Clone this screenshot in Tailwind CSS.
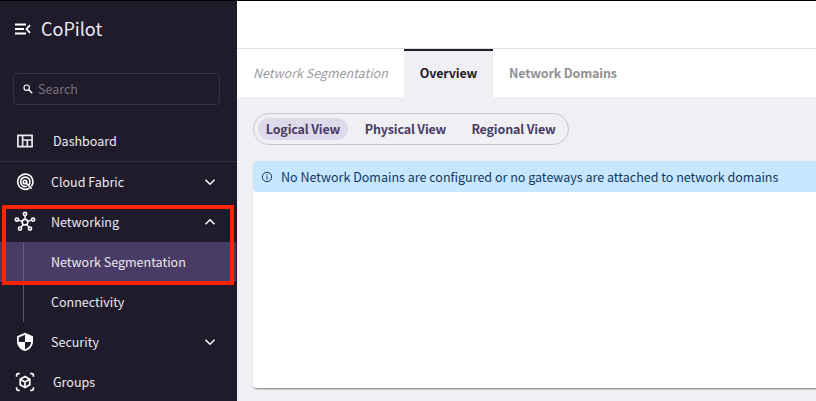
<!DOCTYPE html>
<html lang="en">
<head>
<meta charset="utf-8">
<title>CoPilot</title>
<script src="https://cdn.jsdelivr.net/npm/@tailwindcss/browser@4"></script>
</head>
<body class="w-[816px] h-[401px] overflow-hidden bg-[#f0eff4] font-['Noto_Sans_CJK_SC','Noto_Sans',sans-serif] text-[12.53px] whitespace-nowrap">
<div class="relative flex h-[401px] border-t border-black">
  <aside class="w-[237px] shrink-0 bg-[#201b2b] text-[#ebe9ef] overflow-hidden">
    <div class="flex h-[56px] items-center pl-[15px] gap-[10px]">
      <svg class="w-4 h-3 text-white" viewBox="0 0 16 12" fill="none" stroke="currentColor" stroke-width="1.8"><path d="M0 1.5h11M0 6h9M0 10.5h11M15 2.2L11.5 6L15 9.8"/></svg>
      <span class="pb-[2px] text-[18px] leading-6">CoPilot</span>
    </div>
    <div class="mt-4 ml-[13px] flex h-8 w-[207px] items-center rounded-[4px] border border-[#373150] pl-[9px] gap-[5px]">
      <svg class="w-[10px] h-[10px] text-white" viewBox="0 0 10 10" fill="none" stroke="currentColor"><circle cx="3.7" cy="3.7" r="2.7" stroke-width="1.1"/><path d="M5.8 5.8L9.2 9.2" stroke-width="1.3"/></svg>
      <span class="text-[#77727f]">Search</span>
    </div>
    <nav class="mt-4">
      <div class="flex h-[41px] items-center border-b border-[#322d47] pl-[15px]">
        <svg class="w-5 h-5" viewBox="0 0 20 20" fill="none" stroke="currentColor" stroke-width="1.7"><path d="M2.9 4.4H17.1V15.6H2.9ZM7.6 4.4V15.6M7.6 9H17.1M12.3 9V15.6"/></svg>
        <span class="ml-[18px]">Dashboard</span>
      </div>
      <div class="flex h-10 items-center pl-[15px] pr-[21px]">
        <svg class="w-5 h-5" viewBox="0 0 20 20" fill="none" stroke="white" stroke-width="1.6"><path d="M16.4 14.3A7.6 7.6 0 1 0 14.3 16.2M13.5 13.3A4.7 4.7 0 1 0 11.8 14.3M10.3 10.3L16.6 16.6"/><circle cx="10" cy="10" r="1.8"/></svg>
        <span class="ml-4 flex-1">Cloud Fabric</span>
        <svg class="w-[12px] h-2" viewBox="0 0 12 8" fill="none" stroke="white" stroke-width="1.5"><path d="M1.5 1.7L6 6.2L10.5 1.7"/></svg>
      </div>
      <div class="flex h-10 items-center pl-[15px] pr-[21px]">
        <svg class="w-5 h-5 overflow-visible" viewBox="0 0 20 20" fill="none" stroke="white" stroke-width="1.6"><circle cx="10" cy="10.2" r="2.8"/><circle cx="10" cy="2" r="1.6"/><circle cx="1.9" cy="7.6" r="1.6"/><circle cx="18.1" cy="7.6" r="1.6"/><circle cx="5" cy="16.6" r="1.6"/><circle cx="15" cy="16.6" r="1.6"/><path stroke-width="1.4" d="M10 3.8V7.4M3.4 8.1L7.3 9.3M16.6 8.1L12.7 9.3M6 15.4L8.3 12.5M14 15.4L11.7 12.5"/></svg>
        <span class="ml-4 flex-1">Networking</span>
        <svg class="w-[12px] h-2" viewBox="0 0 12 8" fill="none" stroke="white" stroke-width="1.5"><path d="M1.5 6.3L6 1.8L10.5 6.3"/></svg>
      </div>
      <div class="mr-px flex h-10 items-center bg-[#483c66] pl-[23px]"><div class="flex h-10 items-center border-l border-[#686078] pl-[27px]">Network Segmentation</div></div>
      <div class="flex h-10 items-center pl-[23px]"><div class="flex h-10 items-center border-l border-[#5a5564] pl-[27px]">Connectivity</div></div>
      <div class="flex h-10 items-center pl-[15px] pr-[21px]">
        <svg class="w-5 h-5" viewBox="0 0 20 20"><path fill="white" d="M10 .8L18 4.2V9.2C18 13.8 14.7 17.8 10 19.1C5.3 17.8 2 13.8 2 9.2V4.2Z"/><path fill="#201b2b" d="M10 2.8V10H3.8V5.4ZM10 10H16.2C15.8 13.3 13.3 16.2 10 17.2Z"/></svg>
        <span class="ml-4 flex-1">Security</span>
        <svg class="w-[12px] h-2" viewBox="0 0 12 8" fill="none" stroke="white" stroke-width="1.5"><path d="M1.5 1.7L6 6.2L10.5 1.7"/></svg>
      </div>
      <div class="flex h-10 items-center pl-[15px]">
        <svg class="w-5 h-5" viewBox="0 0 20 20" fill="none" stroke="white" stroke-width="1.7"><path d="M1.6 4.7V3.2Q1.6 1.6 3.2 1.6H4.8M15.2 1.6H16.8Q18.4 1.6 18.4 3.2V4.7M18.4 15.3V16.8Q18.4 18.4 16.8 18.4H15.2M4.8 18.4H3.2Q1.6 18.4 1.6 16.8V15.3M10 4.6L14.8 7.3V12.7L10 15.4L5.2 12.7V7.3ZM5.2 7.3L10 10L14.8 7.3M10 10V15.4"/></svg>
        <span class="ml-[18px]">Groups</span>
      </div>
    </nav>
  </aside>
  <main class="flex flex-1 min-w-0 flex-col">
    <div class="h-12 shrink-0 border-b border-[#dedee1] bg-white"></div>
    <div class="flex h-12 shrink-0 bg-white">
      <div class="flex w-[167px] items-center pl-4 pt-px italic text-[#9b9b9d]">Network Segmentation</div>
      <div class="flex w-[89px] items-center justify-center border-t-2 border-[#201b2b] bg-[#f0eff4] pb-px font-bold tracking-[-0.17px] text-[#201b2b]">Overview</div>
      <div class="flex items-center pl-4 pt-px font-bold tracking-[-0.17px] text-[#919096]">Network Domains</div>
    </div>
    <div class="pl-4 pt-4">
      <div class="flex h-8 w-[316px] items-center rounded-full border border-[#c9c7d0] pl-1 font-bold tracking-[-0.17px] text-[#483c66]">
        <div class="flex h-[22px] w-[90px] items-center justify-center rounded-full bg-[#dedae9]">Logical View</div>
        <div class="flex w-[115px] justify-center">Physical View</div>
        <div class="flex w-[101px] justify-center">Regional View</div>
      </div>
      <div class="mt-4 h-[227px] w-[600px] rounded bg-white shadow-[0_2px_2px_-1px_rgba(0,0,0,0.5)]">
        <div class="flex h-[31px] items-center rounded bg-[#c6e7ff] pl-[9px] text-[#123763]">
          <svg class="w-[10px] h-[10px] overflow-visible" viewBox="0 0 10 10" fill="none" stroke="currentColor"><circle cx="5" cy="5" r="4.7"/><path d="M5 4.3V7.6M5 2.3V3.4"/></svg>
          <span class="ml-[9px] pt-px">No Network Domains are configured or no gateways are attached to network domains</span>
        </div>
      </div>
    </div>
  </main>
  <div class="absolute left-[2px] top-[204px] h-[80px] w-[232px] border-4 border-[#ff2400]"></div>
</div>
</body>
</html>
